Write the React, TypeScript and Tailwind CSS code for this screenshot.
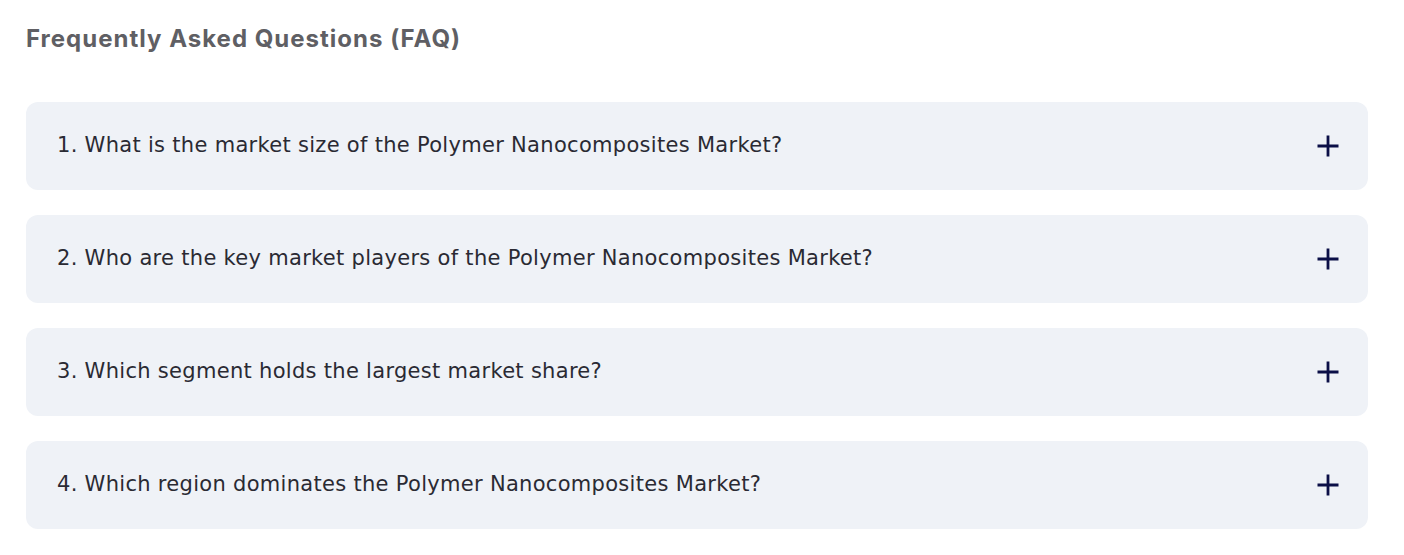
const faqs = [
  "1. What is the market size of the Polymer Nanocomposites Market?",
  "2. Who are the key market players of the Polymer Nanocomposites Market?",
  "3. Which segment holds the largest market share?",
  "4. Which region dominates the Polymer Nanocomposites Market?",
]

function PlusIcon() {
  return (
    <svg width="22" height="22" viewBox="0 0 22 22" className="shrink-0 text-[#0b0f47]">
      <path d="M11 0.5v21M0.5 11h21" stroke="currentColor" strokeWidth="2.8" />
    </svg>
  )
}

export default function App() {
  return (
    <div className="min-h-screen bg-white pl-[26px] pr-[36px] pt-[24px]">
      <h2 className="font-['Inter',sans-serif] text-[24px] font-bold leading-[30px] tracking-[1px] text-[#5f5f64]">
        Frequently Asked Questions (FAQ)
      </h2>
      <div className="mt-[48px] flex flex-col gap-[25px]">
        {faqs.map((q) => (
          <div
            key={q}
            className="flex h-[88px] items-center justify-between rounded-[12px] bg-[#eff2f7] pl-[31px] pr-[29px]"
          >
            <span className="font-['DejaVu_Sans',sans-serif] text-[21px] tracking-[0.3px] text-[#2a2a33]">{q}</span>
            <PlusIcon />
          </div>
        ))}
      </div>
    </div>
  )
}
